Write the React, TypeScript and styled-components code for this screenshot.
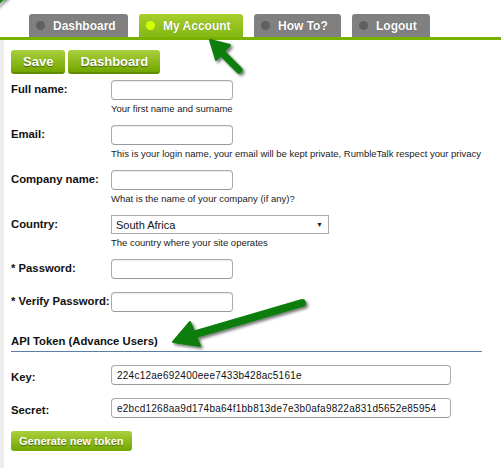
import styled, { createGlobalStyle } from "styled-components";

const GlobalStyle = createGlobalStyle`
  html, body {
    margin: 0;
    padding: 0;
    background: #ffffff;
    font-family: "Liberation Sans", Arial, sans-serif;
  }
`;

const tabs = [
  { label: "Dashboard", active: false, width: 99 },
  { label: "My Account", active: true, width: 104 },
  { label: "How To?", active: false, width: 87 },
  { label: "Logout", active: false, width: 78 },
];

type Field = {
  label: string;
  hint?: string;
  kind?: "text" | "select";
};

const fields: Field[] = [
  { label: "Full name:", hint: "Your first name and surname" },
  {
    label: "Email:",
    hint: "This is your login name, your email will be kept private, RumbleTalk respect your privacy",
  },
  { label: "Company name:", hint: "What is the name of your company (if any)?" },
  { label: "Country:", hint: "The country where your site operates", kind: "select" },
  { label: "* Password:" },
  { label: "* Verify Password:" },
];

const App = () => {
  return (
    <SPage>
      <GlobalStyle />
      <STabBar>
        {tabs.map((t) => (
          <STab key={t.label} $active={t.active} $width={t.width}>
            <SDot $active={t.active} />
            {t.label}
          </STab>
        ))}
      </STabBar>
      <SBody>
        <SActions>
          <SButton>Save</SButton>
          <SButton>Dashboard</SButton>
        </SActions>

        {fields.map((f) => (
          <SRow key={f.label} $tight={!f.hint}>
            <SLabel>{f.label}</SLabel>
            <SControl>
              {f.kind === "select" ? (
                <SSelect>
                  <span>South Africa</span>
                  <SCaret>▼</SCaret>
                </SSelect>
              ) : (
                <SInput />
              )}
              {f.hint && <SHint>{f.hint}</SHint>}
            </SControl>
          </SRow>
        ))}

        <SSection>API Token (Advance Users)</SSection>

        <STokenRow>
          <SLabel>Key:</SLabel>
          <STokenInput>224c12ae692400eee7433b428ac5161e</STokenInput>
        </STokenRow>
        <STokenRow>
          <SLabel>Secret:</SLabel>
          <STokenInput>e2bcd1268aa9d174ba64f1bb813de7e3b0afa9822a831d5652e85954</STokenInput>
        </STokenRow>

        <SSmallButton>Generate new token</SSmallButton>
      </SBody>

      <SArrows width="501" height="468" viewBox="0 0 501 468">
        <defs>
          <filter id="sh" x="-20%" y="-20%" width="140%" height="140%">
            <feDropShadow dx="2" dy="2" stdDeviation="1.6" floodColor="#000" floodOpacity="0.55" />
          </filter>
        </defs>
        <g filter="url(#sh)" fill="#0a7d0a" stroke="#0a7d0a" strokeLinecap="round" strokeLinejoin="round">
          <path d="M-6 8 L4 -4 L10 -6 Z" />
          <line x1="239" y1="70" x2="221" y2="52" strokeWidth="7" fill="none" />
          <path d="M210 40 L230 45 L216 60 Z" strokeWidth="2" />
          <line x1="302" y1="303" x2="196" y2="334" strokeWidth="8" fill="none" />
          <path d="M173 342 L190 322 L200 346 Z" strokeWidth="2" />
        </g>
      </SArrows>
    </SPage>
  );
};

export default App;

const SPage = styled.div`
  position: relative;
  width: 501px;
  height: 468px;
  overflow: hidden;
  background: #fff;
`;

const STabBar = styled.div`
  display: flex;
  align-items: flex-end;
  gap: 11px;
  padding: 14px 0 0 29px;
  border-bottom: 3px solid #7ab000;
  height: 23px;
`;

const STab = styled.div<{ $active: boolean; $width: number }>`
  display: flex;
  align-items: center;
  box-sizing: border-box;
  width: ${(p) => p.$width}px;
  height: 23px;
  padding-left: 7px;
  border-radius: 3px 3px 0 0;
  background: ${(p) =>
    p.$active ? "linear-gradient(#a6cf2e, #84b812)" : "#808080"};
  color: #fff;
  font-size: 12px;
  font-weight: bold;
  text-shadow: 0 0 1px rgba(0, 0, 0, 0.35);
`;

const SDot = styled.span<{ $active: boolean }>`
  width: 9px;
  height: 9px;
  border-radius: 50%;
  margin-right: 8px;
  background: ${(p) => (p.$active ? "#d4ff00" : "#5f5f5f")};
`;

const SBody = styled.div`
  border-left: 4px solid #ededed;
  padding: 10px 0 17px 7px;
`;

const SActions = styled.div`
  display: flex;
  gap: 3px;
  margin-bottom: 6px;
`;

const SButton = styled.div`
  display: flex;
  align-items: center;
  height: 24px;
  padding: 0 12px;
  border-radius: 3px;
  background: linear-gradient(#a9d03d, #73a600);
  border-bottom: 2px solid #5f8c00;
  box-sizing: border-box;
  color: #fff;
  font-size: 13px;
  font-weight: bold;
  text-shadow: 0 1px 1px rgba(0, 0, 0, 0.45);
`;

const SRow = styled.div<{ $tight: boolean }>`
  display: flex;
  align-items: flex-start;
  margin-bottom: ${(p) => (p.$tight ? "13px" : "11px")};
`;

const SLabel = styled.div`
  width: 100px;
  flex-shrink: 0;
  padding-top: 3px;
  font-size: 11.3px;
  font-weight: bold;
  color: #111;
  white-space: nowrap;
`;

const SControl = styled.div`
  display: flex;
  flex-direction: column;
`;

const SInput = styled.div`
  box-sizing: border-box;
  width: 122px;
  height: 20px;
  border: 1px solid #aaa;
  border-bottom-color: #999;
  border-radius: 4px;
  box-shadow: inset 0 1px 1px rgba(0, 0, 0, 0.08);
  background: #fff;
`;

const SSelect = styled.div`
  display: flex;
  align-items: center;
  justify-content: space-between;
  box-sizing: border-box;
  width: 218px;
  height: 19px;
  padding: 0 5px 0 4px;
  border: 1px solid #a9a9a9;
  font-size: 11px;
  color: #111;
`;

const SCaret = styled.span`
  font-size: 7px;
  color: #222;
`;

const SHint = styled.div`
  margin-top: 3px;
  font-size: 9.5px;
  line-height: 11px;
  color: #222;
  white-space: nowrap;
`;

const SSection = styled.div`
  margin: 22px 19px 13px 0;
  padding-bottom: 3px;
  border-bottom: 1px solid #5b7fa4;
  font-size: 11.3px;
  line-height: 14px;
  font-weight: bold;
  color: #111;
`;

const STokenRow = styled.div`
  display: flex;
  align-items: center;
  margin-bottom: 13px;
`;

const STokenInput = styled.div`
  box-sizing: border-box;
  width: 340px;
  height: 20px;
  padding: 4px 4px 0 5px;
  border: 1px solid #aaa;
  border-bottom-color: #999;
  border-radius: 4px;
  overflow: hidden;
  white-space: nowrap;
  font-size: 10px;
  color: #111;
  letter-spacing: 0.25px;
`;

const SSmallButton = styled.div`
  display: inline-flex;
  align-items: center;
  height: 20px;
  padding: 0 8px;
  border-radius: 3px;
  background: linear-gradient(#a9d03d, #73a600);
  color: #fff;
  font-size: 11px;
  font-weight: bold;
  text-shadow: 0 1px 1px rgba(0, 0, 0, 0.45);
`;

const SArrows = styled.svg`
  position: absolute;
  left: 0;
  top: 0;
  pointer-events: none;
  overflow: visible;
`;
